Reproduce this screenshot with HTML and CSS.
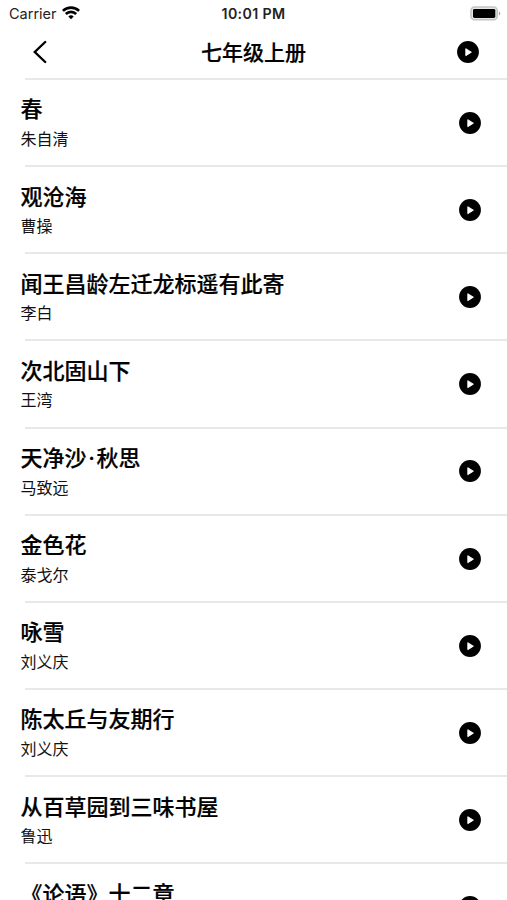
FILE: index.html
```html
<!DOCTYPE html>
<html lang="zh-CN">
<head>
<meta charset="utf-8">
<title>七年级上册</title>
<link rel="stylesheet" href="styles.css">
</head>
<body>
<svg width="0" height="0" class="defs" aria-hidden="true">
  <symbol id="play" viewBox="0 0 24 24">
    <circle cx="12" cy="12" r="11.9" fill="#000"/>
    <path d="M9.6 8.4v7.6l6.1-3.8z" fill="#fff" stroke="#fff" stroke-width="1" stroke-linejoin="round"/>
  </symbol>
</svg>
<div class="screen">
  <div class="status">
    <div class="carrier"><span>Carrier</span>
      <svg class="wifi" width="18" height="14" viewBox="0 0 18 14" fill="none" stroke="#000" stroke-width="2.6">
        <path d="M.9 4.9a11.6 11.6 0 0 1 16.2 0"/>
        <path d="M3.8 8a7.4 7.4 0 0 1 10.4 0"/>
        <path d="M9 13.3l-2.7-2.8a3.9 3.9 0 0 1 5.4 0z" fill="#000" stroke="none"/>
      </svg>
    </div>
    <div class="clock">10:01 PM</div>
    <svg class="battery" width="31" height="16" viewBox="0 0 31 16">
      <rect x="1" y="1" width="26.2" height="12.8" rx="3.6" fill="#e6e6e6" stroke="#c4c4c4" stroke-width="1.6"/>
      <rect x="3" y="2.9" width="22.3" height="9" rx="1.4" fill="#000"/>
      <path d="M28.8 5.2c2 .9 2 3.5 0 4.4z" fill="#a8a8a8"/>
    </svg>
  </div>
  <div class="nav">
    <svg class="back" width="16" height="24" viewBox="0 0 16 24" fill="none" stroke="#000" stroke-width="2.4" stroke-linecap="round"><path d="M13.2 2L2.8 12l10.4 10"/></svg>
    <h1>七年级上册</h1>
    <svg class="play"><use href="#play"/></svg>
  </div>
  <ul class="list">
    <li><div><h2>春</h2><p>朱自清</p></div><svg class="play"><use href="#play"/></svg></li>
    <li><div><h2>观沧海</h2><p>曹操</p></div><svg class="play"><use href="#play"/></svg></li>
    <li><div><h2>闻王昌龄左迁龙标遥有此寄</h2><p>李白</p></div><svg class="play"><use href="#play"/></svg></li>
    <li><div><h2>次北固山下</h2><p>王湾</p></div><svg class="play"><use href="#play"/></svg></li>
    <li><div><h2>天净沙<span class="dot">·</span>秋思</h2><p>马致远</p></div><svg class="play"><use href="#play"/></svg></li>
    <li><div><h2>金色花</h2><p>泰戈尔</p></div><svg class="play"><use href="#play"/></svg></li>
    <li><div><h2>咏雪</h2><p>刘义庆</p></div><svg class="play"><use href="#play"/></svg></li>
    <li><div><h2>陈太丘与友期行</h2><p>刘义庆</p></div><svg class="play"><use href="#play"/></svg></li>
    <li><div><h2>从百草园到三味书屋</h2><p>鲁迅</p></div><svg class="play"><use href="#play"/></svg></li>
    <li><div><h2>《论语》十二章</h2></div><svg class="play"><use href="#play"/></svg></li>
  </ul>
</div>
</body>
</html>
```
FILE: styles.css
```css
* { box-sizing: border-box; margin: 0; padding: 0; }
body { background: #fff; color: #000; font-family: Inter, "Noto Sans CJK SC", sans-serif; overflow: hidden; }
.defs { display: block; }
.screen { height: 900px; overflow: hidden; }
.status { height: 27px; display: grid; grid-template-columns: 1fr auto 1fr; align-items: center; padding: 0 6px 0 9px; font-size: 14.5px; line-height: 27px; }
.carrier { display: flex; align-items: center; gap: 5px; color: #222; }
.wifi { display: block; margin-top: -1px; }
.clock { font-size: 14.2px; font-weight: 600; color: #222; letter-spacing: .35px; margin-right: 3px; padding-top: 1px; line-height: 26px; }
.battery { justify-self: end; }
.nav { height: 51px; display: grid; grid-template-columns: 1fr auto 1fr; align-items: center; padding: 0 28px 2px 32px; }
.nav .play { justify-self: end; }
h1 { font-size: 21px; font-weight: 500; line-height: 30px; margin: 2px 4px 0 0; -webkit-text-stroke: .2px #000; }
.play { width: 22px; height: 22px; display: block; flex: none; }
.list { list-style: none; }
.list li { height: 87.15px; display: flex; justify-content: space-between; align-items: flex-start; padding: 0 26px 0 20.5px; background: linear-gradient(#e8e8e8, #e8e8e8) 25px 0 / 100% 2px no-repeat; }
.list .play { margin-top: 33.8px; }
h2 { font-size: 22px; font-weight: 500; line-height: 30px; margin-top: 16.4px; -webkit-text-stroke: .2px #000; }
.dot { display: inline-block; width: 10px; text-align: center; }
p { font-size: 16px; line-height: 24px; margin-top: 2.6px; color: #111; }
```
